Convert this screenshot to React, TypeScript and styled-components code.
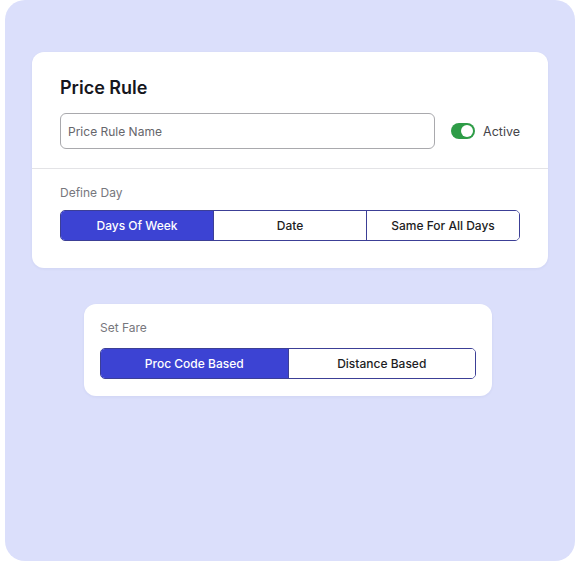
import styled, { createGlobalStyle } from 'styled-components'

const GlobalStyle = createGlobalStyle`
  body {
    margin: 0;
    background: #ffffff;
    font-family: Inter, "Liberation Sans", sans-serif;
  }
`

const Backdrop = styled.div`
  margin: 0 5px;
  height: 561px;
  border-radius: 20px;
  background: #dbdffb;
  padding-top: 52px;
  box-sizing: border-box;
  display: flex;
  flex-direction: column;
  gap: 36px;
`

const Card = styled.div<{ $width: number; $left: number }>`
  width: ${p => p.$width}px;
  margin-left: ${p => p.$left}px;
  background: #ffffff;
  border-radius: 12px;
  box-shadow: 0 1px 3px rgba(40, 50, 120, 0.06);
`

const Header = styled.div`
  padding: 24px 28px 19px;
  border-bottom: 1px solid #e3e3e6;
`

const Title = styled.h1`
  margin: 0 0 13px;
  font-size: 18px;
  line-height: 24px;
  font-weight: 600;
  color: #16161d;
`

const NameRow = styled.div`
  display: flex;
  align-items: center;
  gap: 16px;
`

const NameInput = styled.input`
  flex: 1;
  height: 36px;
  box-sizing: border-box;
  border: 1px solid #a9a9ad;
  border-radius: 6px;
  padding: 0 7px;
  font-family: inherit;
  font-size: 12px;
  color: #222;
  outline: none;

  &::placeholder {
    color: #66666b;
  }
`

const ToggleWrap = styled.label`
  display: flex;
  align-items: center;
  gap: 8px;
  font-size: 12.5px;
  color: #45454b;
`

const Track = styled.span<{ $on: boolean }>`
  position: relative;
  width: 24px;
  height: 16px;
  border-radius: 8px;
  background: ${p => (p.$on ? '#2e9c47' : '#c8c8cc')};
`

const Knob = styled.span<{ $on: boolean }>`
  position: absolute;
  top: 2px;
  left: ${p => (p.$on ? '10px' : '2px')};
  width: 12px;
  height: 12px;
  border-radius: 50%;
  background: #ffffff;
`

const Section = styled.div<{ $pad: string; $gap: number }>`
  padding: ${p => p.$pad};
  display: flex;
  flex-direction: column;
  gap: ${p => p.$gap}px;
`

const Label = styled.div`
  font-size: 12px;
  line-height: 16px;
  color: #77777d;
`

const Segmented = styled.div`
  display: flex;
  height: 31px;
  border: 1px solid #3c3f96;
  border-radius: 5px;
  overflow: hidden;
  box-sizing: border-box;
`

const Segment = styled.button<{ $active: boolean }>`
  flex: 1;
  border: none;
  border-left: 1px solid #3c3f96;
  background: ${p => (p.$active ? '#3c43d3' : '#ffffff')};
  color: ${p => (p.$active ? '#ffffff' : '#1d1d24')};
  font-family: inherit;
  font-size: 12px;
  font-weight: 450;
  padding: 0;
  cursor: pointer;

  &:first-child {
    border-left: none;
  }
`

const Choice = ({ options, active }: { options: string[]; active: number }) => (
  <Segmented>
    {options.map((o, i) => (
      <Segment key={o} $active={i === active}>
        {o}
      </Segment>
    ))}
  </Segmented>
)

const App = () => {
  return (
    <>
      <GlobalStyle />
      <Backdrop>
        <Card $width={516} $left={27}>
          <Header>
            <Title>Price Rule</Title>
            <NameRow>
              <NameInput placeholder="Price Rule Name" />
              <ToggleWrap>
                <Track $on>
                  <Knob $on />
                </Track>
                Active
              </ToggleWrap>
            </NameRow>
          </Header>
          <Section $pad="16px 28px 27px" $gap={9}>
            <Label>Define Day</Label>
            <Choice options={['Days Of Week', 'Date', 'Same For All Days']} active={0} />
          </Section>
        </Card>
        <Card $width={408} $left={79}>
          <Section $pad="16px 16px 17px" $gap={12}>
            <Label>Set Fare</Label>
            <Choice options={['Proc Code Based', 'Distance Based']} active={0} />
          </Section>
        </Card>
      </Backdrop>
    </>
  )
}

export default App
